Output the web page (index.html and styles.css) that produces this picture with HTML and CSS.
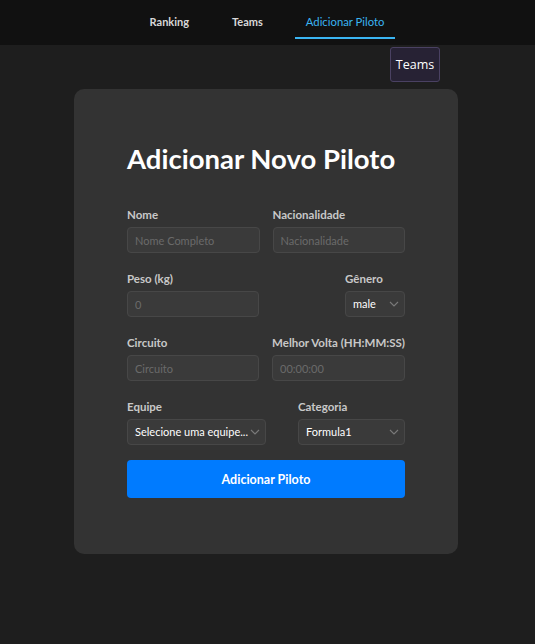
FILE: index.html
```html
<!DOCTYPE html>
<html lang="pt">
<head>
<meta charset="utf-8">
<title>Adicionar Piloto</title>
<link rel="stylesheet" href="styles.css">
</head>
<body>
<nav class="nav">
  <a class="nav-link">Ranking</a>
  <a class="nav-link">Teams</a>
  <a class="nav-link active">Adicionar Piloto</a>
</nav>
<div class="toolbar">
  <button class="teams-btn">Teams</button>
</div>
<main class="card">
  <h1 class="title">Adicionar Novo Piloto</h1>
  <form class="form">
    <div class="row grid2">
      <div class="field">
        <label class="label">Nome</label>
        <input class="input" placeholder="Nome Completo">
      </div>
      <div class="field">
        <label class="label">Nacionalidade</label>
        <input class="input" placeholder="Nacionalidade">
      </div>
    </div>
    <div class="row between">
      <div class="field w132">
        <label class="label">Peso (kg)</label>
        <input class="input" placeholder="0">
      </div>
      <div class="field">
        <label class="label">Gênero</label>
        <div class="select-wrap w60">
          <div class="select">male</div>
          <svg class="chev" width="10" height="6" viewBox="0 0 10 6"><path d="M1 1l4 4 4-4" fill="none" stroke="#7a7a7a" stroke-width="1.1"/></svg>
        </div>
      </div>
    </div>
    <div class="row grid2">
      <div class="field">
        <label class="label">Circuito</label>
        <input class="input" placeholder="Circuito">
      </div>
      <div class="field">
        <label class="label">Melhor Volta (HH:MM:SS)</label>
        <input class="input" placeholder="00:00:00">
      </div>
    </div>
    <div class="row between">
      <div class="field">
        <label class="label">Equipe</label>
        <div class="select-wrap w139">
          <div class="select">Selecione uma equipe...</div>
          <svg class="chev" width="10" height="6" viewBox="0 0 10 6"><path d="M1 1l4 4 4-4" fill="none" stroke="#7a7a7a" stroke-width="1.1"/></svg>
        </div>
      </div>
      <div class="field">
        <label class="label">Categoria</label>
        <div class="select-wrap w107">
          <div class="select">Formula1</div>
          <svg class="chev" width="10" height="6" viewBox="0 0 10 6"><path d="M1 1l4 4 4-4" fill="none" stroke="#7a7a7a" stroke-width="1.1"/></svg>
        </div>
      </div>
    </div>
    <button type="button" class="submit">Adicionar Piloto</button>
  </form>
</main>
</body>
</html>
```
FILE: styles.css
```css
* { box-sizing: border-box; }
html, body { margin: 0; padding: 0; }
body {
  background: #1e1e1e;
  font-family: "Lato", "Open Sans", sans-serif;
  color: #fff;
  padding-right: 3px;
}
.nav {
  height: 45px;
  background: #111111;
  display: flex;
  justify-content: center;
  align-items: stretch;
  gap: 21px;
  margin-right: -3px;
  padding-right: 1px;
}
.nav-link {
  display: flex;
  align-items: center;
  padding: 7px 11px 2px;
  margin-bottom: 6px;
  font-size: 11px;
  font-weight: 700;
  color: #d8d8d8;
  border-bottom: 2px solid transparent;
}
.nav-link.active {
  color: #3ab4f2;
  font-weight: 400;
  font-size: 11.3px;
  border-bottom-color: #3ab4f2;
}
.toolbar {
  display: flex;
  justify-content: flex-end;
  padding: 2px 92px 0 0;
}
.teams-btn {
  width: 50px;
  height: 35px;
  background: #272234;
  border: 1px solid #4a4162;
  border-radius: 3px;
  color: #fff;
  font-family: "Open Sans", sans-serif;
  font-size: 12.5px;
  padding: 0;
}
.card {
  width: 384px;
  margin: 7px auto 0;
  background: #333333;
  border-radius: 10px;
  padding: 50px 53px 56px;
}
.title {
  margin: 0 0 28px;
  font-size: 27.5px;
  font-weight: 700;
  line-height: 40px;
  color: #fff;
}
.form { display: flex; flex-direction: column; }
.row { margin-bottom: 18px; }
.grid2 { display: grid; grid-template-columns: 1fr 1fr; column-gap: 13px; }
.between { display: flex; justify-content: space-between; }
.field { display: flex; flex-direction: column; }
.label {
  font-size: 11.5px;
  font-weight: 700;
  color: #c8c8c8;
  line-height: 16px;
  margin-bottom: 4px;
  white-space: nowrap;
}
.input {
  height: 26px;
  width: 100%;
  background: #3a3a3a;
  border: 1px solid #474747;
  border-radius: 4px;
  padding: 0 7px;
  font-family: inherit;
  font-size: 11px;
  color: #fff;
  outline: none;
}
.input::placeholder { color: #6a6a6a; }
.w132 { width: 132px; }
.w60 { width: 60px; }
.w139 { width: 139px; }
.w107 { width: 107px; }
.select-wrap { position: relative; }
.select {
  height: 26px;
  background: #3a3a3a;
  border: 1px solid #474747;
  border-radius: 4px;
  padding: 0 16px 0 7px;
  font-size: 11px;
  line-height: 24px;
  color: #fff;
  white-space: nowrap;
  overflow: hidden;
  text-overflow: ellipsis;
}
.chev { position: absolute; right: 6px; top: 10px; }
.row:last-of-type { margin-bottom: 15px; }
.submit {
  height: 38px;
  width: 100%;
  background: #007bff;
  border: none;
  border-radius: 4px;
  color: #fff;
  font-family: inherit;
  font-size: 12.5px;
  font-weight: 700;
}
```
